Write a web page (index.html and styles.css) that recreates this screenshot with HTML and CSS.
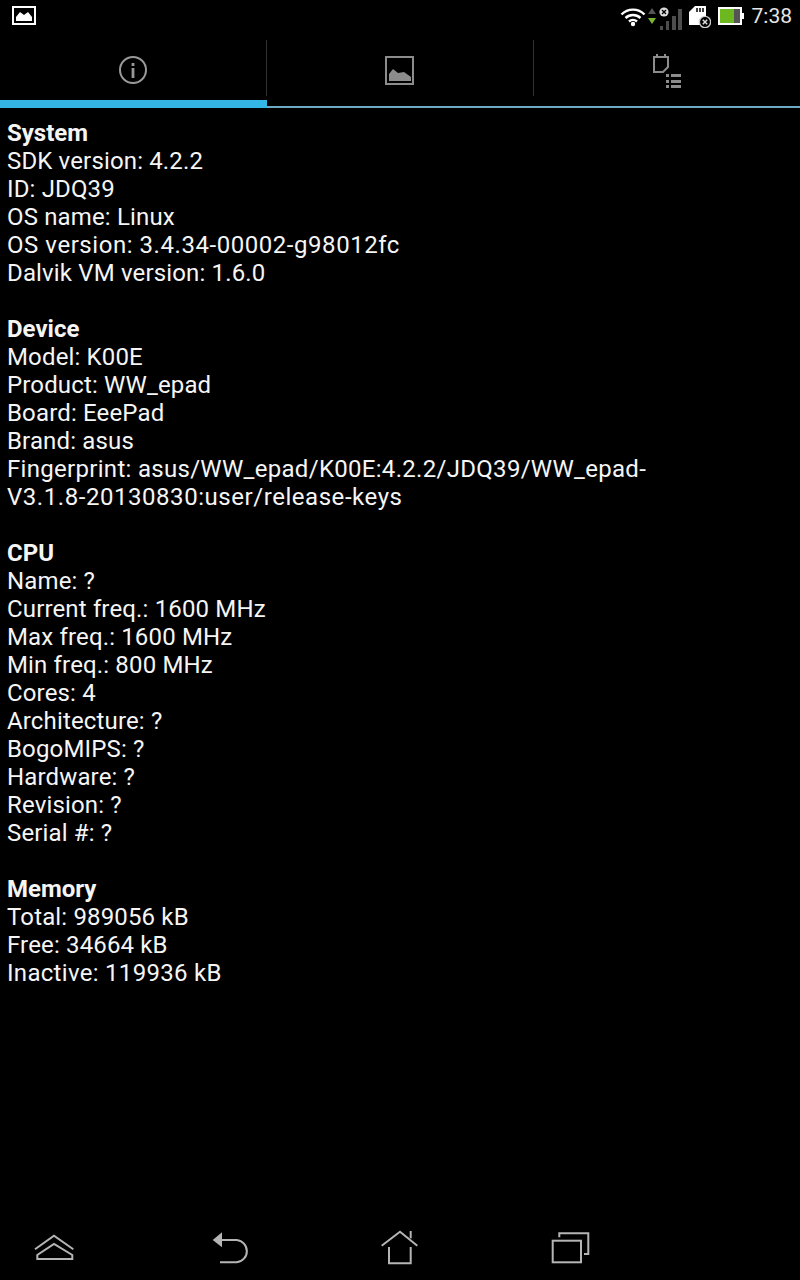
FILE: index.html
```html
<!DOCTYPE html>
<html lang="en">
<head>
    <meta charset="UTF-8">
    <meta name="viewport" content="width=device-width, initial-scale=1.0">
    <title>Device info</title>
    <link rel="stylesheet" href="styles.css">
</head>
<body>
    <div class="status-bar">
        <svg class="notif-icon" width="24" height="20" viewBox="0 0 24 20">
            <rect x="1" y="1" width="22" height="17" fill="none" stroke="#fff" stroke-width="2"/>
            <path d="M4 15 V11 L8 6 L12 9 L16 6 L20 11 V15 Z" fill="#fff"/>
        </svg>
        <div class="status-icons">
            <svg class="icon-wifi" width="26" height="20" viewBox="0 0 26 20">
                <g fill="none" stroke="#fff" stroke-width="2.4">
                    <path d="M1.5 7.5 A16 16 0 0 1 24.5 7.5"/>
                    <path d="M5.5 11 A11 11 0 0 1 20.5 11"/>
                    <path d="M9 14.5 A6 6 0 0 1 17 14.5"/>
                </g>
                <circle cx="13" cy="17" r="2.2" fill="#fff"/>
            </svg>
            <svg class="icon-arrows" width="8" height="20" viewBox="0 0 8 20">
                <path d="M0 7 L4 1 L8 7 Z" fill="#555"/>
                <path d="M0 11 H8 L4 17 Z" fill="#7cb82f"/>
            </svg>
            <svg class="icon-signal" width="26" height="24" viewBox="0 0 26 24">
                <g fill="#4d4d4d">
                    <rect x="2" y="20" width="3" height="4"/>
                    <rect x="8" y="15" width="3" height="9"/>
                    <rect x="14" y="10" width="4" height="14"/>
                    <rect x="20" y="3" width="4" height="21"/>
                </g>
                <circle cx="6" cy="6" r="4.6" fill="#ddd"/>
                <path d="M4 4 L8 8 M8 4 L4 8" stroke="#000" stroke-width="1.4"/>
            </svg>
            <svg class="icon-sd" width="22" height="22" viewBox="0 0 22 22">
                <path d="M6 0 H17 V19 H0 V6 Z" fill="#fff"/>
                <path d="M8 2 V6 M11 2 V6 M14 2 V6" stroke="#000" stroke-width="1.5"/>
                <circle cx="16" cy="16" r="5.6" fill="#000" stroke="#ccc" stroke-width="1.4"/>
                <path d="M13.8 13.8 L18.2 18.2 M18.2 13.8 L13.8 18.2" stroke="#ddd" stroke-width="1.5"/>
            </svg>
            <svg class="icon-battery" width="26" height="18" viewBox="0 0 26 18">
                <rect x="1" y="1" width="22" height="16" fill="#555" stroke="#fff" stroke-width="2"/>
                <rect x="2" y="2" width="14" height="14" fill="#6cb81e"/>
                <rect x="24" y="6" width="2" height="6" fill="#fff"/>
            </svg>
            <span class="clock">7:38</span>
        </div>
    </div>

    <div class="tabs">
        <div class="tab active">
            <div class="tab-body">
                <svg width="32" height="34" viewBox="0 0 32 34">
                    <circle cx="16" cy="16" r="13" fill="none" stroke="#999" stroke-width="2"/>
                    <rect x="14.6" y="9" width="2.8" height="3" fill="#999"/>
                    <rect x="14.6" y="14" width="2.8" height="10" fill="#999"/>
                </svg>
            </div>
        </div>
        <div class="tab">
            <div class="tab-body">
                <svg width="32" height="34" viewBox="0 0 32 34">
                    <rect x="2" y="3" width="27" height="27" fill="none" stroke="#8c8c8c" stroke-width="2"/>
                    <path d="M5 27 V20 L9 15 L14 19 L20 18 L27 23 V27 Z" fill="#8c8c8c"/>
                </svg>
            </div>
        </div>
        <div class="tab">
            <div class="tab-body">
                <svg width="32" height="34" viewBox="0 0 32 34">
                    <path d="M3 3 H17 V13 L12 18 H3 Z" fill="none" stroke="#8c8c8c" stroke-width="2"/>
                    <path d="M6 0 V3 M14 0 V3" stroke="#8c8c8c" stroke-width="2"/>
                    <g fill="#8c8c8c">
                        <rect x="15" y="20" width="3" height="3"/>
                        <rect x="20" y="20" width="10" height="3"/>
                        <rect x="15" y="26" width="3" height="3"/>
                        <rect x="20" y="26" width="10" height="3"/>
                        <rect x="15" y="31" width="3" height="3"/>
                        <rect x="20" y="31" width="10" height="3"/>
                    </g>
                </svg>
            </div>
        </div>
    </div>

    <div class="content">
        <section class="info-group">
            <h2>System</h2>
            <p>SDK version: 4.2.2</p>
            <p>ID: JDQ39</p>
            <p>OS name: Linux</p>
            <p class="wide">OS version: 3.4.34-00002-g98012fc</p>
            <p>Dalvik VM version: 1.6.0</p>
        </section>
        <section class="info-group">
            <h2>Device</h2>
            <p>Model: K00E</p>
            <p>Product: WW_epad</p>
            <p>Board: EeePad</p>
            <p>Brand: asus</p>
            <p class="mid">Fingerprint: asus/WW_epad/K00E:4.2.2/JDQ39/WW_epad-<br><span class="wide">V3.1.8-20130830:user/release-keys</span></p>
        </section>
        <section class="info-group">
            <h2>CPU</h2>
            <p>Name: ?</p>
            <p>Current freq.: 1600 MHz</p>
            <p>Max freq.: 1600 MHz</p>
            <p>Min freq.: 800 MHz</p>
            <p>Cores: 4</p>
            <p>Architecture: ?</p>
            <p>BogoMIPS: ?</p>
            <p>Hardware: ?</p>
            <p>Revision: ?</p>
            <p>Serial #: ?</p>
        </section>
        <section class="info-group">
            <h2>Memory</h2>
            <p>Total: 989056 kB</p>
            <p>Free: 34664 kB</p>
            <p class="mid">Inactive: 119936 kB</p>
        </section>
    </div>

    <div class="nav-bar">
        <svg width="48" height="48" viewBox="0 0 48 48">
            <g fill="none" stroke="#b5b5b5" stroke-width="2">
                <path d="M4 25.3 L23 11.7 L42.3 25.3"/>
                <path d="M6.3 35 V31 L23 20 L41.3 31 V35 Z"/>
            </g>
        </svg>
        <svg width="48" height="48" viewBox="0 0 48 48">
            <path d="M6.7 16 L16 8.3 V23.3 Z" fill="#b5b5b5"/>
            <path d="M16 16 H30.7 A11.2 11.2 0 0 1 30.7 38.3 H14" fill="none" stroke="#b5b5b5" stroke-width="2"/>
        </svg>
        <svg width="48" height="48" viewBox="0 0 48 48">
            <g fill="none" stroke="#b5b5b5" stroke-width="2">
                <path d="M6.7 21.7 L25 7.7 L42.3 21.7"/>
                <path d="M35.7 7 V14.3"/>
                <path d="M14 23 V39.3 H35.7 V23"/>
            </g>
        </svg>
        <svg width="48" height="48" viewBox="0 0 48 48">
            <g fill="none" stroke="#b5b5b5" stroke-width="2">
                <rect x="6.7" y="16.7" width="28.3" height="21.6"/>
                <path d="M13.3 13.3 V9.3 H42.3 V30 H38"/>
            </g>
        </svg>
    </div>
</body>
</html>
```

FILE: styles.css
```css
* {
    margin: 0;
    padding: 0;
    box-sizing: border-box;
}

body {
    font-family: Roboto, "Liberation Sans", sans-serif;
    background-color: #000;
    color: #fff;
    height: 1280px;
    display: flex;
    flex-direction: column;
    overflow: hidden;
}

.status-bar {
    height: 40px;
    flex: none;
    display: flex;
    justify-content: space-between;
    align-items: flex-start;
    padding: 6px 8px 0 12px;
}

.status-bar svg {
    display: block;
}

.status-icons {
    display: flex;
    align-items: flex-start;
}

.icon-wifi {
    margin-top: 1px;
}

.icon-arrows {
    margin: 1px 0 0 2px;
}

.icon-signal {
    margin: 0 0 0 2px;
}

.icon-sd {
    margin: 0 0 0 5px;
}

.icon-battery {
    margin: 1px 0 0 7px;
}

.clock {
    font-size: 21px;
    line-height: 20px;
    color: #e6e6e6;
    margin-left: 8px;
}

.tabs {
    height: 68px;
    flex: none;
    display: grid;
    grid-template-columns: 267px 267px 266px;
}

.tab {
    border-bottom: 2px solid #6ea9c4;
}

.tab.active {
    border-bottom: 8px solid #33b5e5;
}

.tab-body {
    height: 56px;
    padding-top: 14px;
    display: flex;
    justify-content: center;
    align-items: flex-start;
    border-right: 1px solid #333;
}

.tab:last-child .tab-body {
    border-right: none;
}

.content {
    flex: 1;
    padding: 11px 7px 0;
    font-size: 24px;
    line-height: 28px;
    letter-spacing: 0.15px;
    color: #f5f5f5;
}

.mid {
    letter-spacing: 0.3px;
}

.wide {
    letter-spacing: 0.55px;
}

.info-group {
    margin-bottom: 28px;
}

h2 {
    font-size: 24px;
    font-weight: 700;
    line-height: 28px;
    letter-spacing: 0;
    color: #f5f5f5;
}

.nav-bar {
    height: 56px;
    flex: none;
    display: grid;
    grid-template-columns: 175px 169px 171px 48px;
    padding-left: 31px;
}
```
